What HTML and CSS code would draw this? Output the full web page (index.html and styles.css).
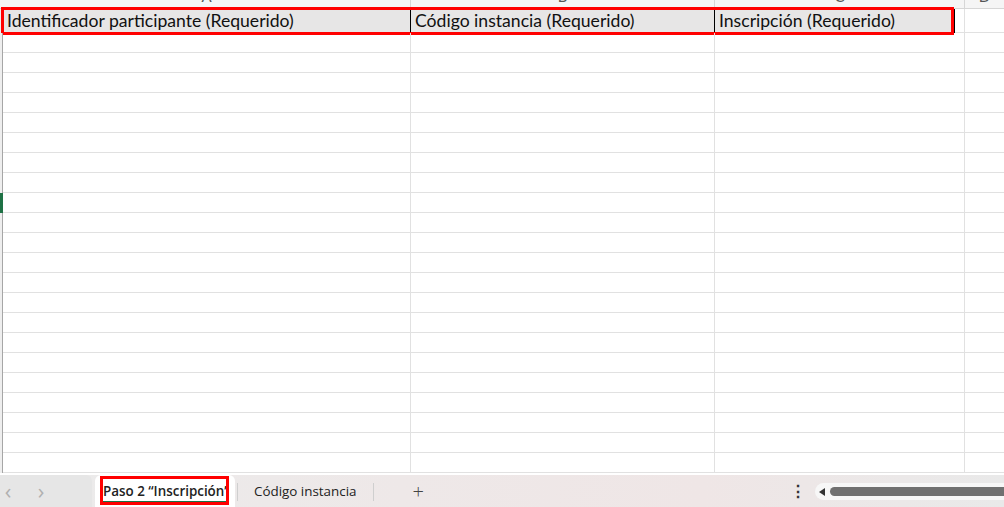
FILE: index.html
```html
<!DOCTYPE html>
<html lang="es">
<head>
  <meta charset="UTF-8" />
  <title>Paso 2 Inscripción</title>
  <link rel="stylesheet" href="styles.css">
</head>
<body>
  <div class="sheet">
    <!-- letras de columna (cortadas arriba) -->
    <div class="colhead">
      <div class="corner"></div>
      <div class="ch col-a"><span>A</span></div>
      <div class="ch col-b"><span>B</span></div>
      <div class="ch col-c"><span>C</span></div>
      <div class="ch col-d"><span>D</span></div>
    </div>

    <div class="row head">
      <div class="rh"></div>
      <div class="cell col-a">Identificador participante (Requerido)</div>
      <div class="cell col-b">Código instancia (Requerido)</div>
      <div class="cell col-c">Inscripción (Requerido)</div>
      <div class="cell gap"></div>
      <div class="cell col-d"></div>
      <div class="mark-head"></div>
    </div>

    <div id="rows"></div>
  </div>

  <div class="tabbar">
    <div class="nav">
      <span class="chev">&lsaquo;</span>
      <span class="chev">&rsaquo;</span>
    </div>
    <div class="tab active">
      <span class="tab-label">Paso 2 “Inscripción”</span>
      <div class="mark-tab"></div>
    </div>
    <div class="sep"></div>
    <div class="tab">Código instancia</div>
    <div class="sep"></div>
    <div class="add">+</div>
    <div class="spacer"></div>
    <div class="dots">&#8942;</div>
    <div class="hscroll">
      <span class="arrow"></span>
      <span class="thumb"></span>
    </div>
  </div>

  <script>
    const rows = document.getElementById('rows');
    let html = '';
    for (let i = 0; i < 22; i++) {
      html += `<div class="row${i === 8 ? ' sel' : ''}">
        <div class="rh"></div>
        <div class="cell col-a"></div>
        <div class="cell col-b"></div>
        <div class="cell col-c2"></div>
        <div class="cell col-d"></div>
      </div>`;
    }
    rows.innerHTML = html;
  </script>
</body>
</html>
```

FILE: styles.css
```css
body {
  margin: 0;
  width: 1004px;
  height: 507px;
  overflow: hidden;
  background: #fff;
  font-family: Lato, "Liberation Sans", sans-serif;
}
.sheet {
  height: 475px;
  overflow: hidden;
}
.colhead {
  display: flex;
  height: 8px;
  background: #f5f5f5;
  border-bottom: 1px solid #d6d6d6;
  overflow: hidden;
}
.corner {
  width: 3px;
  flex: none;
}
.ch {
  flex: none;
  height: 8px;
  text-align: center;
  border-right: 1px solid #d6d6d6;
  box-sizing: border-box;
  overflow: hidden;
}
.ch span {
  display: block;
  margin-top: -13px;
  font-size: 15px;
  line-height: 18px;
  color: #555;
}
.row {
  display: flex;
  height: 20px;
  position: relative;
}
.rh {
  width: 3px;
  flex: none;
  box-sizing: border-box;
  background: #eeeeee;
  border-right: 1px solid #a6a6a6;
}
.cell {
  flex: none;
  box-sizing: border-box;
  border-right: 1px solid #e1e1e1;
  border-bottom: 1px solid #e1e1e1;
}
.col-a { width: 408px; }
.col-b { width: 304px; }
.col-c { width: 240px; }
.col-c2 { width: 250px; }
.col-d { width: 40px; }
.gap { width: 10px; }
.ch.col-c { width: 250px; }

.row.head {
  height: 24px;
}
.row.head .cell {
  background: #e7e6e6;
  border-right: 1px solid #000;
  border-bottom: 1px solid #000;
  font-size: 17.6px;
  line-height: 23px;
  color: #111;
  padding-left: 4px;
  white-space: nowrap;
  overflow: hidden;
}
.row.head .gap,
.row.head .col-d {
  background: #fff;
  border-right: 1px solid #e1e1e1;
  border-bottom: 1px solid #e1e1e1;
}
.row.sel .rh {
  border-right: 2px solid #1e7145;
  background: #1e7145;
}
.mark-head {
  position: absolute;
  left: 1px;
  top: -2px;
  width: 953px;
  height: 28px;
  border: 3px solid #f00;
  box-sizing: border-box;
}

.tabbar {
  height: 32px;
  display: flex;
  align-items: stretch;
  background: linear-gradient(90deg, #ebebeb 0%, #eee8e8 40%, #efe6e6 70%, #e9e9e9 100%);
  font-family: "Open Sans", "Liberation Sans", sans-serif;
  font-size: 13.4px;
  color: #222;
}
.nav {
  width: 92px;
  flex: none;
  display: flex;
  align-items: center;
  gap: 17px;
  padding-left: 0;
  box-sizing: border-box;
  background: #e6e6e6;
  border-top-right-radius: 6px;
}
.chev {
  color: #b0b0b0;
  font-size: 22px;
  line-height: 20px;
  width: 16px;
  text-align: center;
  margin-top: -2px;
}
.tab {
  flex: none;
  display: flex;
  align-items: center;
  padding: 0 14px 0 16px;
  position: relative;
}
.tab.active {
  width: 140px;
  box-sizing: border-box;
  margin-left: 3px;
  padding: 0 0 0 8px;
  background: #fff;
  border-radius: 6px 6px 0 0;
  font-weight: 600;
  overflow: hidden;
  white-space: nowrap;
}
.tab.active .tab-label {
  position: relative;
  padding-bottom: 1px;
  border-bottom: 3px solid #1e7145;
  margin-top: 4px;
  width: 124px;
  overflow: hidden;
}
.mark-tab {
  position: absolute;
  left: 5px;
  top: 1px;
  width: 129px;
  height: 29px;
  border: 3px solid #f00;
  box-sizing: border-box;
}
.sep {
  width: 1px;
  flex: none;
  margin: 8px 0 6px;
  background: #cfcfcf;
}
.tab + .sep { margin-left: 2px; }
.add {
  flex: none;
  display: flex;
  align-items: center;
  margin-left: 39px;
  font-size: 20px;
  font-weight: 300;
  color: #444;
}
.spacer { flex: 1; }
.dots {
  flex: none;
  display: flex;
  align-items: center;
  font-size: 16px;
  font-weight: 700;
  color: #333;
  margin-right: 9px;
}
.hscroll {
  width: 189px;
  flex: none;
  height: 17px;
  align-self: center;
  margin-top: 1px;
  display: flex;
  align-items: center;
  background: #f7f7f7;
  border-radius: 9px 0 0 9px;
  padding-left: 4px;
  box-sizing: border-box;
}
.arrow {
  width: 0;
  height: 0;
  border-top: 4px solid transparent;
  border-bottom: 4px solid transparent;
  border-right: 6px solid #333;
  margin-right: 5px;
}
.thumb {
  flex: 1;
  height: 9px;
  background: #707070;
  border-radius: 5px 0 0 5px;
}
```
